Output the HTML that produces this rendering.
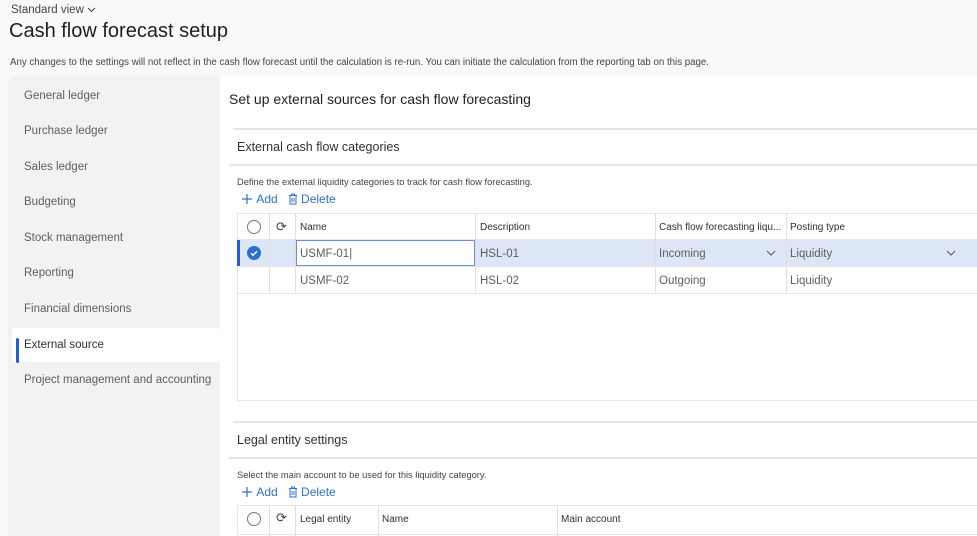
<!DOCTYPE html>
<html><head><meta charset="utf-8"><style>
*{margin:0;padding:0;box-sizing:border-box}
body{width:977px;height:527px;overflow:hidden;background:#faf9f8;font-family:"Liberation Sans",sans-serif;color:#323130;position:relative}
.a{position:absolute;white-space:nowrap}
.nav{position:absolute;left:8px;top:76px;width:212px;height:460px;background:#f3f2f1;border-radius:8px 0 0 0}
.nav div{position:absolute;left:16px;font-size:11.5px;color:#605e5c}
.main{position:absolute;left:220px;top:76px;width:757px;height:460px;background:#fff}
.hl{position:absolute;height:2px;background:#e6e5e4}
.vl{position:absolute;width:1px;background:#e1dfdd}
.t{font-size:10px;color:#323130}
.c{font-size:11.5px;color:#605e5c}
.blue{color:#2f6fd0;font-size:12px;display:flex;align-items:center}
</style></head><body>
<div class="a" style="left:11px;top:4px;font-size:11.5px;color:#444">Standard view <svg width="9" height="6" viewBox="0 0 9 6"><path d="M1 1l3.5 3.5L8 1" fill="none" stroke="#444" stroke-width="1"/></svg></div>
<div class="a" style="left:9px;top:20px;font-size:20px;color:#201f1e">Cash flow forecast setup</div>
<div class="a" style="left:10px;top:57px;font-size:9.7px;color:#444">Any changes to the settings will not reflect in the cash flow forecast until the calculation is re-run. You can initiate the calculation from the reporting tab on this page.</div>
<div class="nav">
<div style="top:14px">General ledger</div>
<div style="top:49px">Purchase ledger</div>
<div style="top:85px">Sales ledger</div>
<div style="top:120px">Budgeting</div>
<div style="top:156px">Stock management</div>
<div style="top:191px">Reporting</div>
<div style="top:227px">Financial dimensions</div>
<div style="left:4px;top:252px;width:208px;height:34px;background:#fff;border-radius:4px"></div>
<div style="left:8px;top:262px;width:3px;height:25px;background:#1f5fd6;border-radius:2px"></div>
<div style="top:263px;color:#323130">External source</div>
<div style="top:298px">Project management and accounting</div>
</div>
<div class="main"></div>
<div class="a" style="left:229px;top:91px;font-size:14px;color:#201f1e">Set up external sources for cash flow forecasting</div>
<div class="hl" style="left:233px;top:128px;width:744px"></div>
<div class="a" style="left:237px;top:140px;font-size:12.5px;color:#323130">External cash flow categories</div>
<div class="hl" style="left:229px;top:164px;width:748px"></div>
<div class="a" style="left:237px;top:177px;font-size:9.3px;color:#444">Define the external liquidity categories to track for cash flow forecasting.</div>
<div class="a blue" style="left:241px;top:192px"><svg width="12" height="12" viewBox="0 0 12 12"><path d="M6 1v10M1 6h10" stroke="#2f6fd0" stroke-width="1.2"/></svg>&nbsp;Add&nbsp;&nbsp;&nbsp;<svg width="10" height="12" viewBox="0 0 10 12"><path d="M1 2.5h8M3.5 2.5V1h3v1.5M2 2.5v8.5h6V2.5M4 5v4M6 5v4" fill="none" stroke="#2f6fd0" stroke-width="1"/></svg>&nbsp;Delete</div>
<!-- grid 1 -->
<div class="a" style="left:237px;top:213px;width:740px;height:188px;border:1px solid #e6e5e4;border-right:none"></div>
<div class="a" style="left:238px;top:240px;width:739px;height:26px;background:#dce6f7"></div>
<div class="a" style="left:237px;top:240px;width:3px;height:26px;background:#1f5fd6"></div>
<div class="hl" style="left:238px;top:239px;width:739px;height:1px"></div>
<div class="hl" style="left:238px;top:266px;width:739px;height:1px"></div>
<div class="hl" style="left:238px;top:293px;width:739px;height:1px"></div>
<div class="vl" style="left:269px;top:214px;height:79px"></div>
<div class="vl" style="left:295px;top:214px;height:79px"></div>
<div class="vl" style="left:475px;top:214px;height:79px"></div>
<div class="vl" style="left:655px;top:214px;height:79px"></div>
<div class="vl" style="left:786px;top:214px;height:79px"></div>
<div class="a" style="left:247px;top:220px;width:14px;height:14px;border:1px solid #777;border-radius:50%"></div>
<div class="a" style="left:276px;top:219px;font-size:13px;color:#444">⟳</div>
<div class="a" style="left:247px;top:246px;width:14px;height:14px;background:#2f6fd0;border-radius:50%"><svg width="14" height="14" viewBox="0 0 14 14" style="position:absolute;left:0;top:0"><path d="M4 7.2l2 2 4-4" fill="none" stroke="#fff" stroke-width="1.4"/></svg></div>
<div class="a t" style="left:300px;top:222px">Name</div>
<div class="a t" style="left:480px;top:222px">Description</div>
<div class="a t" style="left:659px;top:222px">Cash flow forecasting liqu...</div>
<div class="a t" style="left:790px;top:222px">Posting type</div>
<div class="a" style="left:296px;top:240px;width:179px;height:26px;border:1px solid #6b8fd6;background:#fff"></div>
<div class="a c" style="left:300px;top:248px">USMF-01|</div>
<div class="a c" style="left:480px;top:248px">HSL-01</div>
<div class="a c" style="left:659px;top:248px">Incoming</div>
<div class="a" style="left:766px;top:250px"><svg width="10" height="6" viewBox="0 0 10 6" style="display:block"><path d="M1 1l4 4 4-4" fill="none" stroke="#555" stroke-width="1"/></svg></div>
<div class="a c" style="left:790px;top:248px">Liquidity</div>
<div class="a" style="left:946px;top:250px"><svg width="10" height="6" viewBox="0 0 10 6" style="display:block"><path d="M1 1l4 4 4-4" fill="none" stroke="#555" stroke-width="1"/></svg></div>
<div class="a c" style="left:300px;top:275px">USMF-02</div>
<div class="a c" style="left:480px;top:275px">HSL-02</div>
<div class="a c" style="left:659px;top:275px">Outgoing</div>
<div class="a c" style="left:790px;top:275px">Liquidity</div>
<!-- section 2 -->
<div class="hl" style="left:233px;top:421px;width:744px"></div>
<div class="a" style="left:237px;top:433px;font-size:12.5px;color:#323130">Legal entity settings</div>
<div class="hl" style="left:229px;top:457px;width:748px"></div>
<div class="a" style="left:237px;top:470px;font-size:9.3px;color:#444">Select the main account to be used for this liquidity category.</div>
<div class="a blue" style="left:241px;top:485px"><svg width="12" height="12" viewBox="0 0 12 12"><path d="M6 1v10M1 6h10" stroke="#2f6fd0" stroke-width="1.2"/></svg>&nbsp;Add&nbsp;&nbsp;&nbsp;<svg width="10" height="12" viewBox="0 0 10 12"><path d="M1 2.5h8M3.5 2.5V1h3v1.5M2 2.5v8.5h6V2.5M4 5v4M6 5v4" fill="none" stroke="#2f6fd0" stroke-width="1"/></svg>&nbsp;Delete</div>
<div class="a" style="left:237px;top:505px;width:740px;height:30px;border:1px solid #e6e5e4;border-right:none"></div>
<div class="vl" style="left:269px;top:506px;height:30px"></div>
<div class="vl" style="left:295px;top:506px;height:30px"></div>
<div class="vl" style="left:378px;top:506px;height:30px"></div>
<div class="vl" style="left:557px;top:506px;height:30px"></div>
<div class="a" style="left:247px;top:512px;width:14px;height:14px;border:1px solid #777;border-radius:50%"></div>
<div class="a" style="left:276px;top:510px;font-size:13px;color:#444">⟳</div>
<div class="a t" style="left:300px;top:514px">Legal entity</div>
<div class="a t" style="left:382px;top:514px">Name</div>
<div class="a t" style="left:561px;top:514px">Main account</div>
</body></html>
